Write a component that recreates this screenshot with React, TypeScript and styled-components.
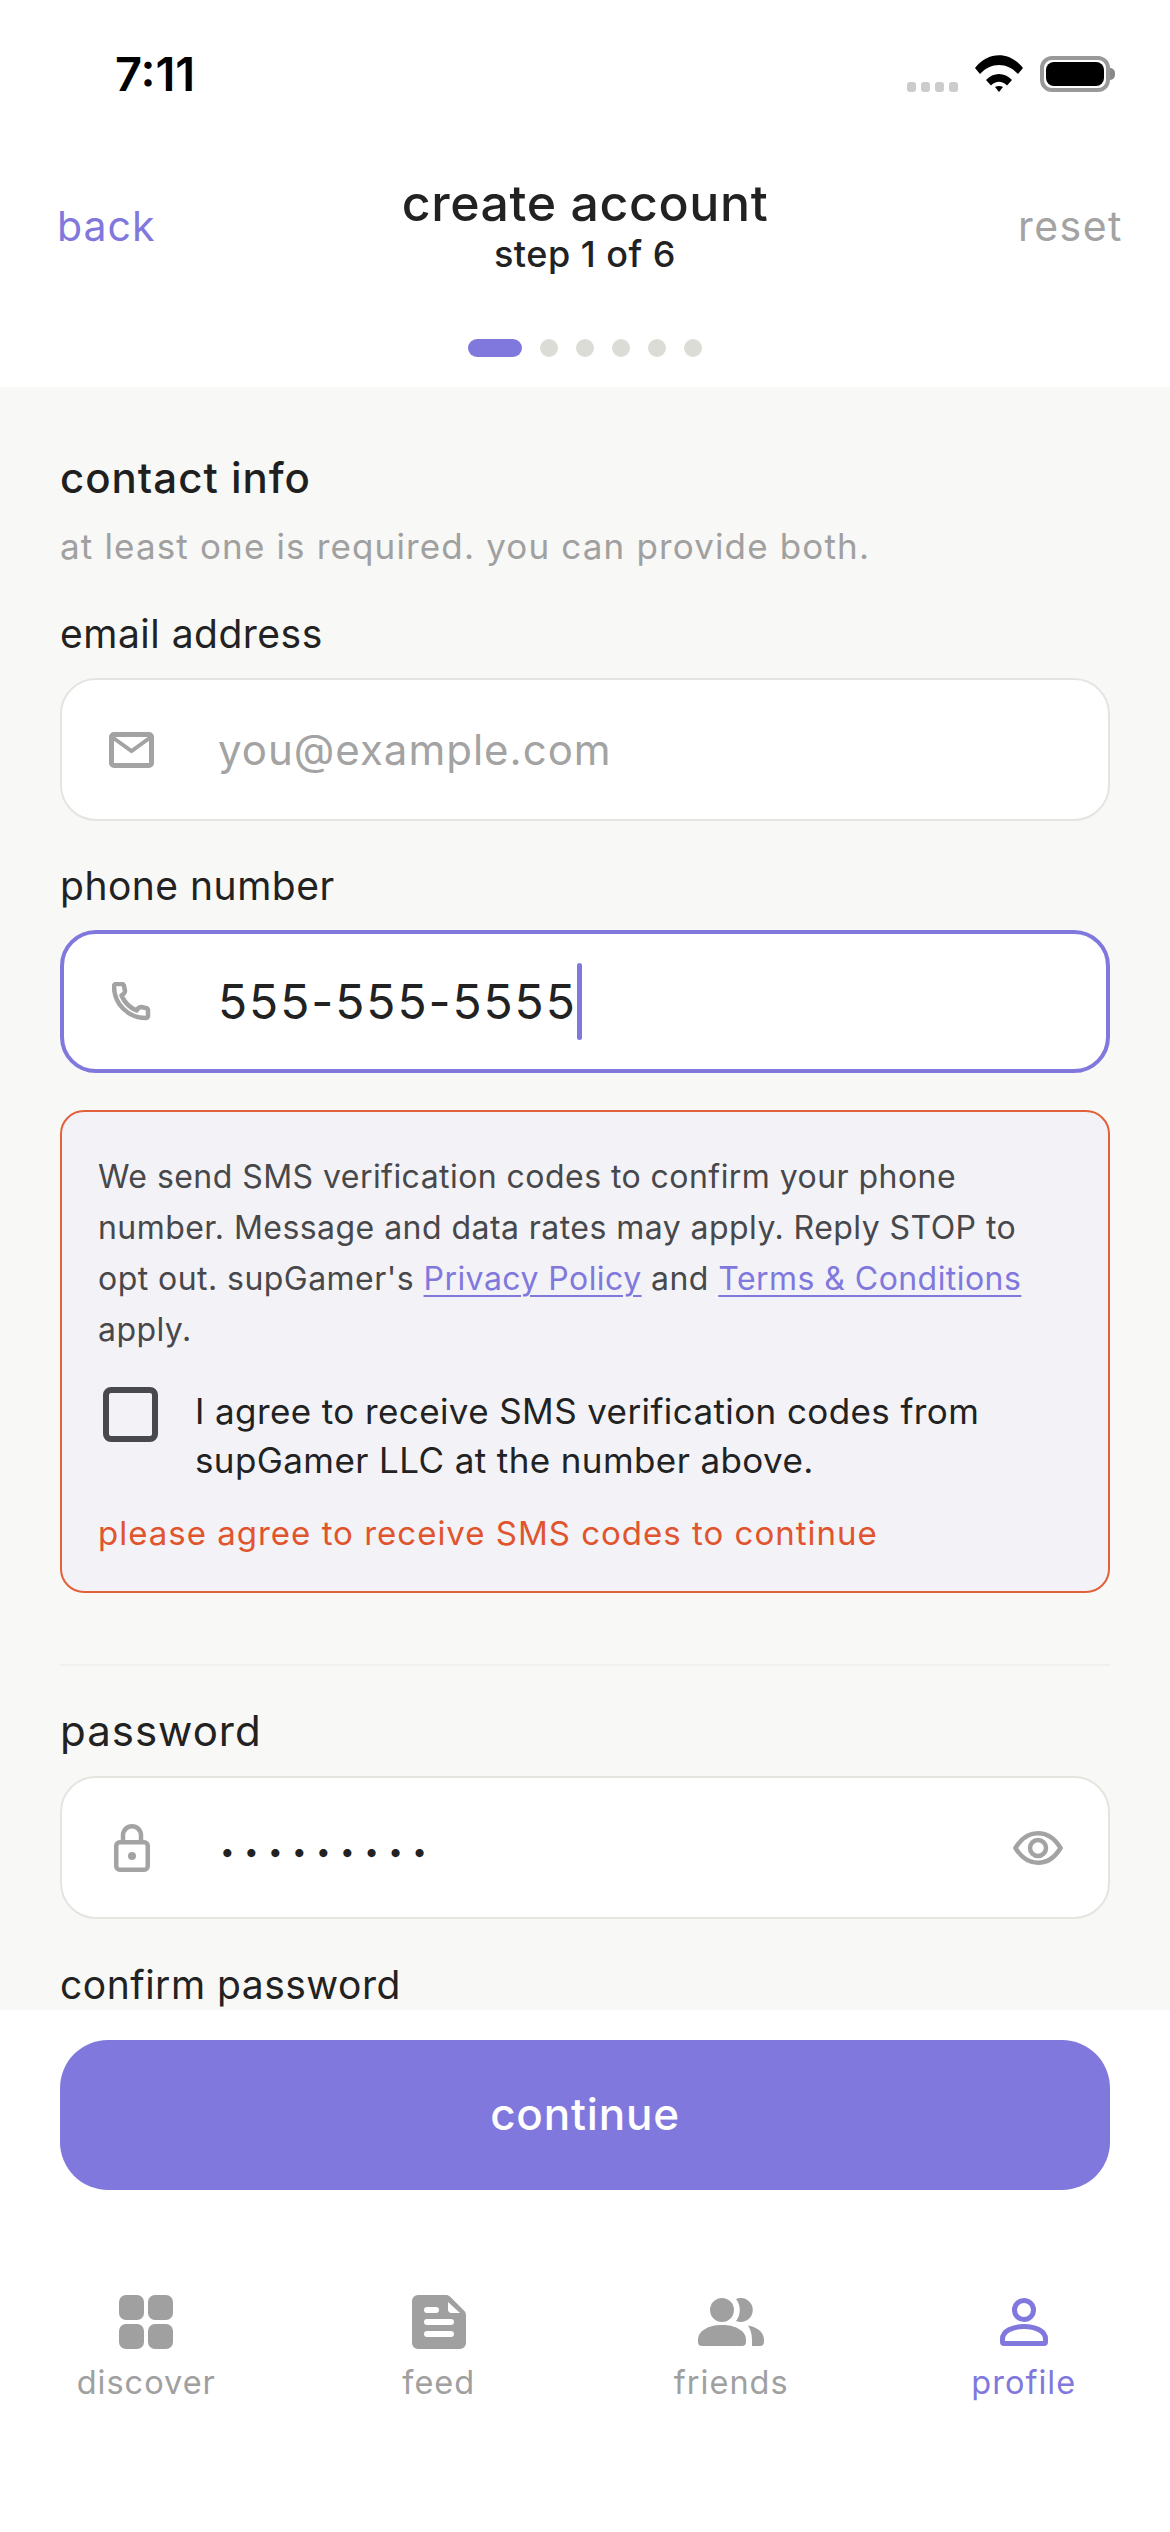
import styled, { createGlobalStyle } from "styled-components";

const purple = "#8178de";

const GlobalStyle = createGlobalStyle`
  html, body {
    margin: 0;
    padding: 0;
    background: #fff;
    font-family: Inter, "Noto Sans", sans-serif;
  }
  * { box-sizing: border-box; }
`;

const MailIcon = () => (
  <svg width="45" height="36" viewBox="0 0 45 36" fill="none" stroke="currentColor">
    <rect x="2.5" y="2.5" width="40" height="31" rx="2.5" strokeWidth="5" />
    <path d="M3 5l19.5 14L42 5" strokeWidth="4" />
  </svg>
);

const PhoneIcon = () => (
  <svg width="40" height="40" viewBox="0 0 40 40" fill="none" stroke="currentColor" strokeWidth="4.5" strokeLinejoin="round">
    <path d="M4 2h6c1 0 2 1 2 2l1 5c0 1-.5 2-1 2.5l-2.5 2c3 7 8 12 15 15l2-2.5c.6-.6 1.5-1 2.5-1l5 1c1 0 2 1 2 2v6c0 1-1 2-2 2C16 36 2 22 2 4c0-1 1-2 2-2z" />
  </svg>
);

const LockIcon = () => (
  <svg width="36" height="48" viewBox="0 0 36 48" fill="none" stroke="currentColor" strokeWidth="4.5">
    <rect x="2.25" y="18.25" width="31.5" height="27.5" rx="3.5" />
    <path d="M9 18v-6.75a9 9 0 0 1 18 0V18" />
    <circle cx="18" cy="32" r="4" fill="currentColor" stroke="none" />
  </svg>
);

const EyeIcon = () => (
  <svg width="50" height="34" viewBox="0 0 50 34" fill="none" stroke="currentColor" strokeWidth="4.5">
    <path d="M2.5 17C9 6 17 2.25 25 2.25S41 6 47.5 17C41 28 33 31.75 25 31.75S9 28 2.5 17z" />
    <circle cx="25" cy="17" r="8" />
  </svg>
);

const DiscoverIcon = () => (
  <svg width="54" height="54" viewBox="0 0 54 54" fill="currentColor">
    <rect x="0" y="0" width="25" height="25" rx="7" />
    <rect x="29" y="0" width="25" height="25" rx="7" />
    <rect x="0" y="29" width="25" height="25" rx="7" />
    <rect x="29" y="29" width="25" height="25" rx="7" />
  </svg>
);

const FeedIcon = () => (
  <svg width="54" height="54" viewBox="0 0 54 54">
    <path d="M6 0h28c1.5 0 3 .6 4 1.6l14.4 14.4c1 1 1.6 2.5 1.6 4V48a6 6 0 0 1-6 6H6a6 6 0 0 1-6-6V6a6 6 0 0 1 6-6z" fill="currentColor" />
    <path d="M36 7l12 11H39c-1.5 0-3-1.5-3-3z" fill="#fff" />
    <rect x="12" y="12" width="15" height="6" rx="3" fill="#fff" />
    <rect x="12" y="24" width="30" height="6" rx="3" fill="#fff" />
    <rect x="12" y="36" width="30" height="6" rx="3" fill="#fff" />
  </svg>
);

const FriendsIcon = () => (
  <svg width="66" height="48" viewBox="0 0 66 48" fill="currentColor">
    <circle cx="24" cy="12" r="12" />
    <path d="M0 42c0-9 10-15 24-15s24 6 24 15v2a4 4 0 0 1-4 4H4a4 4 0 0 1-4-4z" />
    <path d="M38 1a12 12 0 1 1 0 22c5-6 5-16 0-22z" />
    <path d="M50 27.5c9 1.5 16 6.5 16 14.5v2a4 4 0 0 1-4 4h-8v-6c0-6-1.5-10.5-4-14.5z" />
  </svg>
);

const ProfileIcon = () => (
  <svg width="48" height="48" viewBox="0 0 48 48" fill="none" stroke="currentColor" strokeWidth="5">
    <circle cx="24" cy="12" r="9.5" />
    <path d="M2.5 41c0-8 10-12.5 21.5-12.5S45.5 33 45.5 41v3a1.5 1.5 0 0 1-1.5 1.5H4A1.5 1.5 0 0 1 2.5 44z" />
  </svg>
);

const App = () => {
  return (
    <>
      <GlobalStyle />
      <Page>
        <StatusBar>
          <Time>7:11</Time>
          <StatusIcons>
            <SignalDots>
              <SignalDot /><SignalDot /><SignalDot /><SignalDot />
            </SignalDots>
            <svg width="48" height="37" viewBox="0 0 48 37" fill="#000">
              <path d="M0 13C13-4 35-4 48 13l-5 6C32 7 16 7 5 19z" />
              <path d="M11 25c7-8 19-8 26 0l-5 5.5c-5-5-11-5-16 0z" />
              <path d="M20 32c2.5-1.5 5.5-1.5 8 0l-4 5z" />
            </svg>
            <Battery>
              <BatteryFill />
              <BatteryCap />
            </Battery>
          </StatusIcons>
        </StatusBar>

        <Header>
          <BackLink>back</BackLink>
          <HeaderTitles>
            <Title>create account</Title>
            <Step>step 1 of 6</Step>
          </HeaderTitles>
          <ResetLink>reset</ResetLink>
        </Header>

        <Progress>
          <Dot $active />
          <Dot /><Dot /><Dot /><Dot /><Dot />
        </Progress>

        <Scroll>
          <SectionTitle>contact info</SectionTitle>
          <SectionHint>at least one is required. you can provide both.</SectionHint>

          <FieldLabel>email address</FieldLabel>
          <InputBox>
            <InputIcon><MailIcon /></InputIcon>
            <Placeholder>you@example.com</Placeholder>
          </InputBox>

          <FieldLabel>phone number</FieldLabel>
          <InputBox $focused>
            <InputIcon><PhoneIcon /></InputIcon>
            <InputValue>555-555-5555</InputValue>
            <Caret />
          </InputBox>

          <ConsentCard>
            <ConsentText>
              We send SMS verification codes to confirm your phone number. Message and data rates may apply. Reply STOP to opt out. supGamer's <ConsentLink>Privacy Policy</ConsentLink> and <ConsentLink>Terms &amp; Conditions</ConsentLink> apply.
            </ConsentText>
            <CheckRow>
              <CheckBox />
              <CheckLabel>I agree to receive SMS verification codes from supGamer LLC at the number above.</CheckLabel>
            </CheckRow>
            <ErrorText>please agree to receive SMS codes to continue</ErrorText>
          </ConsentCard>

          <Divider />

          <PasswordLabel>password</PasswordLabel>
          <InputBox>
            <InputIcon><LockIcon /></InputIcon>
            <PasswordDots>•••••••••</PasswordDots>
            <EyeButton><EyeIcon /></EyeButton>
          </InputBox>

          <ConfirmLabel>confirm password</ConfirmLabel>
        </Scroll>

        <Footer>
          <ContinueButton>continue</ContinueButton>
        </Footer>

        <TabBar>
          <Tab>
            <TabIcon><DiscoverIcon /></TabIcon>
            <TabLabel>discover</TabLabel>
          </Tab>
          <Tab>
            <TabIcon><FeedIcon /></TabIcon>
            <TabLabel>feed</TabLabel>
          </Tab>
          <Tab>
            <TabIcon><FriendsIcon /></TabIcon>
            <TabLabel>friends</TabLabel>
          </Tab>
          <Tab $active>
            <TabIcon><ProfileIcon /></TabIcon>
            <TabLabel>profile</TabLabel>
          </Tab>
        </TabBar>
      </Page>
    </>
  );
};

const Page = styled.div`
  width: 1170px;
  height: 2532px;
  display: flex;
  flex-direction: column;
  overflow: hidden;
  background: #fff;
`;

const StatusBar = styled.div`
  height: 153px;
  flex-shrink: 0;
  padding: 44px 60px 0 115px;
  display: flex;
  justify-content: space-between;
  align-items: flex-start;
`;

const Time = styled.div`
  font-size: 47px;
  line-height: 60px;
  font-weight: 600;
  color: #000;
`;

const StatusIcons = styled.div`
  display: flex;
  align-items: flex-end;
  gap: 17px;
  margin-top: 11px;
`;

const SignalDots = styled.div`
  display: flex;
  gap: 5px;
`;

const SignalDot = styled.div`
  width: 9px;
  height: 10px;
  border-radius: 3px;
  background: #ccc;
`;

const Battery = styled.div`
  position: relative;
  width: 70px;
  height: 36px;
  border: 4px solid #999;
  border-radius: 12px;
  padding: 2px;
`;

const BatteryFill = styled.div`
  width: 100%;
  height: 100%;
  background: #000;
  border-radius: 8px;
`;

const BatteryCap = styled.div`
  position: absolute;
  right: -9px;
  top: 8px;
  width: 5px;
  height: 12px;
  background: #888;
  border-radius: 0 5px 5px 0;
`;

const Header = styled.div`
  height: 100px;
  flex-shrink: 0;
  padding-top: 21px;
  display: grid;
  grid-template-columns: 1fr auto 1fr;
  align-items: start;
`;

const BackLink = styled.div`
  font-size: 41px;
  line-height: 50px;
  color: ${purple};
  letter-spacing: 1px;
  margin: 27px 0 0 57px;
`;

const ResetLink = styled.div`
  font-size: 41px;
  line-height: 50px;
  color: #a3a3a3;
  letter-spacing: 1.5px;
  margin: 27px 47px 0 0;
  justify-self: end;
`;

const HeaderTitles = styled.div`
  text-align: center;
`;

const Title = styled.div`
  font-size: 50px;
  line-height: 58px;
  color: #222;
  font-weight: 450;
  letter-spacing: 0.6px;
`;

const Step = styled.div`
  font-size: 36px;
  line-height: 44px;
  color: #222;
  font-weight: 450;
  letter-spacing: 0.5px;
`;

const Progress = styled.div`
  height: 134px;
  flex-shrink: 0;
  padding-top: 86px;
  display: flex;
  justify-content: center;
  gap: 18px;
`;

const Dot = styled.div<{ $active?: boolean }>`
  width: ${(p) => (p.$active ? "54px" : "18px")};
  height: 18px;
  border-radius: 9px;
  background: ${(p) => (p.$active ? purple : "#dcdcd6")};
`;

const Scroll = styled.div`
  flex: 1;
  min-height: 0;
  overflow: hidden;
  background: #f8f8f6;
  padding: 61px 60px 0;
`;

const SectionTitle = styled.div`
  font-size: 42px;
  line-height: 60px;
  font-weight: 450;
  color: #1f1f1f;
  letter-spacing: 1px;
`;

const SectionHint = styled.div`
  font-size: 35px;
  line-height: 46px;
  margin-top: 15px;
  color: #a0a0a0;
  letter-spacing: 1.15px;
`;

const FieldLabel = styled.div`
  font-size: 39px;
  line-height: 50px;
  color: #222;
  letter-spacing: 0.5px;
  margin-top: 40px;
  margin-bottom: 19px;
`;

const InputBox = styled.div<{ $focused?: boolean }>`
  height: 143px;
  display: flex;
  align-items: center;
  background: #fff;
  border: ${(p) => (p.$focused ? `4px solid ${purple}` : "2px solid #e4e4e0")};
  border-radius: 36px;
  padding: 0 ${(p) => (p.$focused ? "36px" : "38px")};
`;

const InputIcon = styled.div`
  width: 63px;
  margin-right: 55px;
  flex-shrink: 0;
  color: #a3a3a3;
  display: flex;
  align-items: center;
  justify-content: center;
`;

const Placeholder = styled.div`
  font-size: 42px;
  color: #a3a3a3;
  letter-spacing: 1px;
`;

const InputValue = styled.div`
  font-size: 48px;
  color: #222;
  letter-spacing: 1.9px;
`;

const Caret = styled.div`
  width: 5px;
  height: 77px;
  border-radius: 3px;
  background: ${purple};
`;

const ConsentCard = styled.div`
  margin-top: 37px;
  height: 483px;
  background: #f2f2f7;
  border: 2px solid #e2603a;
  border-radius: 24px;
  padding: 39px 36px 0;
`;

const ConsentText = styled.div`
  font-size: 32px;
  line-height: 51px;
  color: #48484a;
  letter-spacing: 0.45px;
`;

const ConsentLink = styled.span`
  color: ${purple};
  text-decoration: underline;
  text-decoration-thickness: 2px;
  text-underline-offset: 5px;
`;

const CheckRow = styled.div`
  display: flex;
  gap: 37px;
  margin-top: 32px;
  padding-left: 5px;
`;

const CheckBox = styled.div`
  width: 55px;
  height: 55px;
  flex-shrink: 0;
  border: 6px solid #48484f;
  border-radius: 8px;
`;

const CheckLabel = styled.div`
  font-size: 35px;
  line-height: 49px;
  color: #222;
  letter-spacing: 0.4px;
`;

const ErrorText = styled.div`
  font-size: 33px;
  line-height: 46px;
  margin-top: 25px;
  color: #e0552e;
  letter-spacing: 1px;
`;

const Divider = styled.div`
  height: 2px;
  margin-top: 71px;
  background: #f0f0ee;
`;

const PasswordLabel = styled(FieldLabel)`
  font-size: 42px;
  letter-spacing: 1px;
  margin-top: 40px;
  margin-bottom: 20px;
`;

const PasswordDots = styled.div`
  font-size: 26px;
  letter-spacing: 9.4px;
  color: #222;
  flex: 1;
  padding-left: 2px;
  margin-top: 8px;
`;

const EyeButton = styled.div`
  color: #a3a3a3;
  display: flex;
  margin-right: 7px;
`;

const ConfirmLabel = styled(FieldLabel)`
  margin-top: 41px;
`;

const Footer = styled.div`
  height: 180px;
  flex-shrink: 0;
  padding: 30px 60px 0;
  background: #fff;
`;

const ContinueButton = styled.button`
  display: block;
  width: 100%;
  height: 150px;
  border: none;
  border-radius: 48px;
  background: ${purple};
  color: #fff;
  font-family: inherit;
  font-size: 44px;
  font-weight: 450;
  letter-spacing: 0.8px;
  padding: 0 0 2px;
`;

const TabBar = styled.div`
  flex: 0 0 342px;
  display: grid;
  grid-template-columns: repeat(4, 1fr);
  padding-top: 105px;
  align-items: start;
`;

const Tab = styled.div<{ $active?: boolean }>`
  display: flex;
  flex-direction: column;
  align-items: center;
  color: ${(p) => (p.$active ? purple : "#a0a0a0")};
`;

const TabIcon = styled.div`
  height: 54px;
  display: flex;
  align-items: center;
  justify-content: center;
`;

const TabLabel = styled.div`
  font-size: 32.5px;
  line-height: 40px;
  letter-spacing: 1px;
  margin-top: 14px;
`;

export default App;
